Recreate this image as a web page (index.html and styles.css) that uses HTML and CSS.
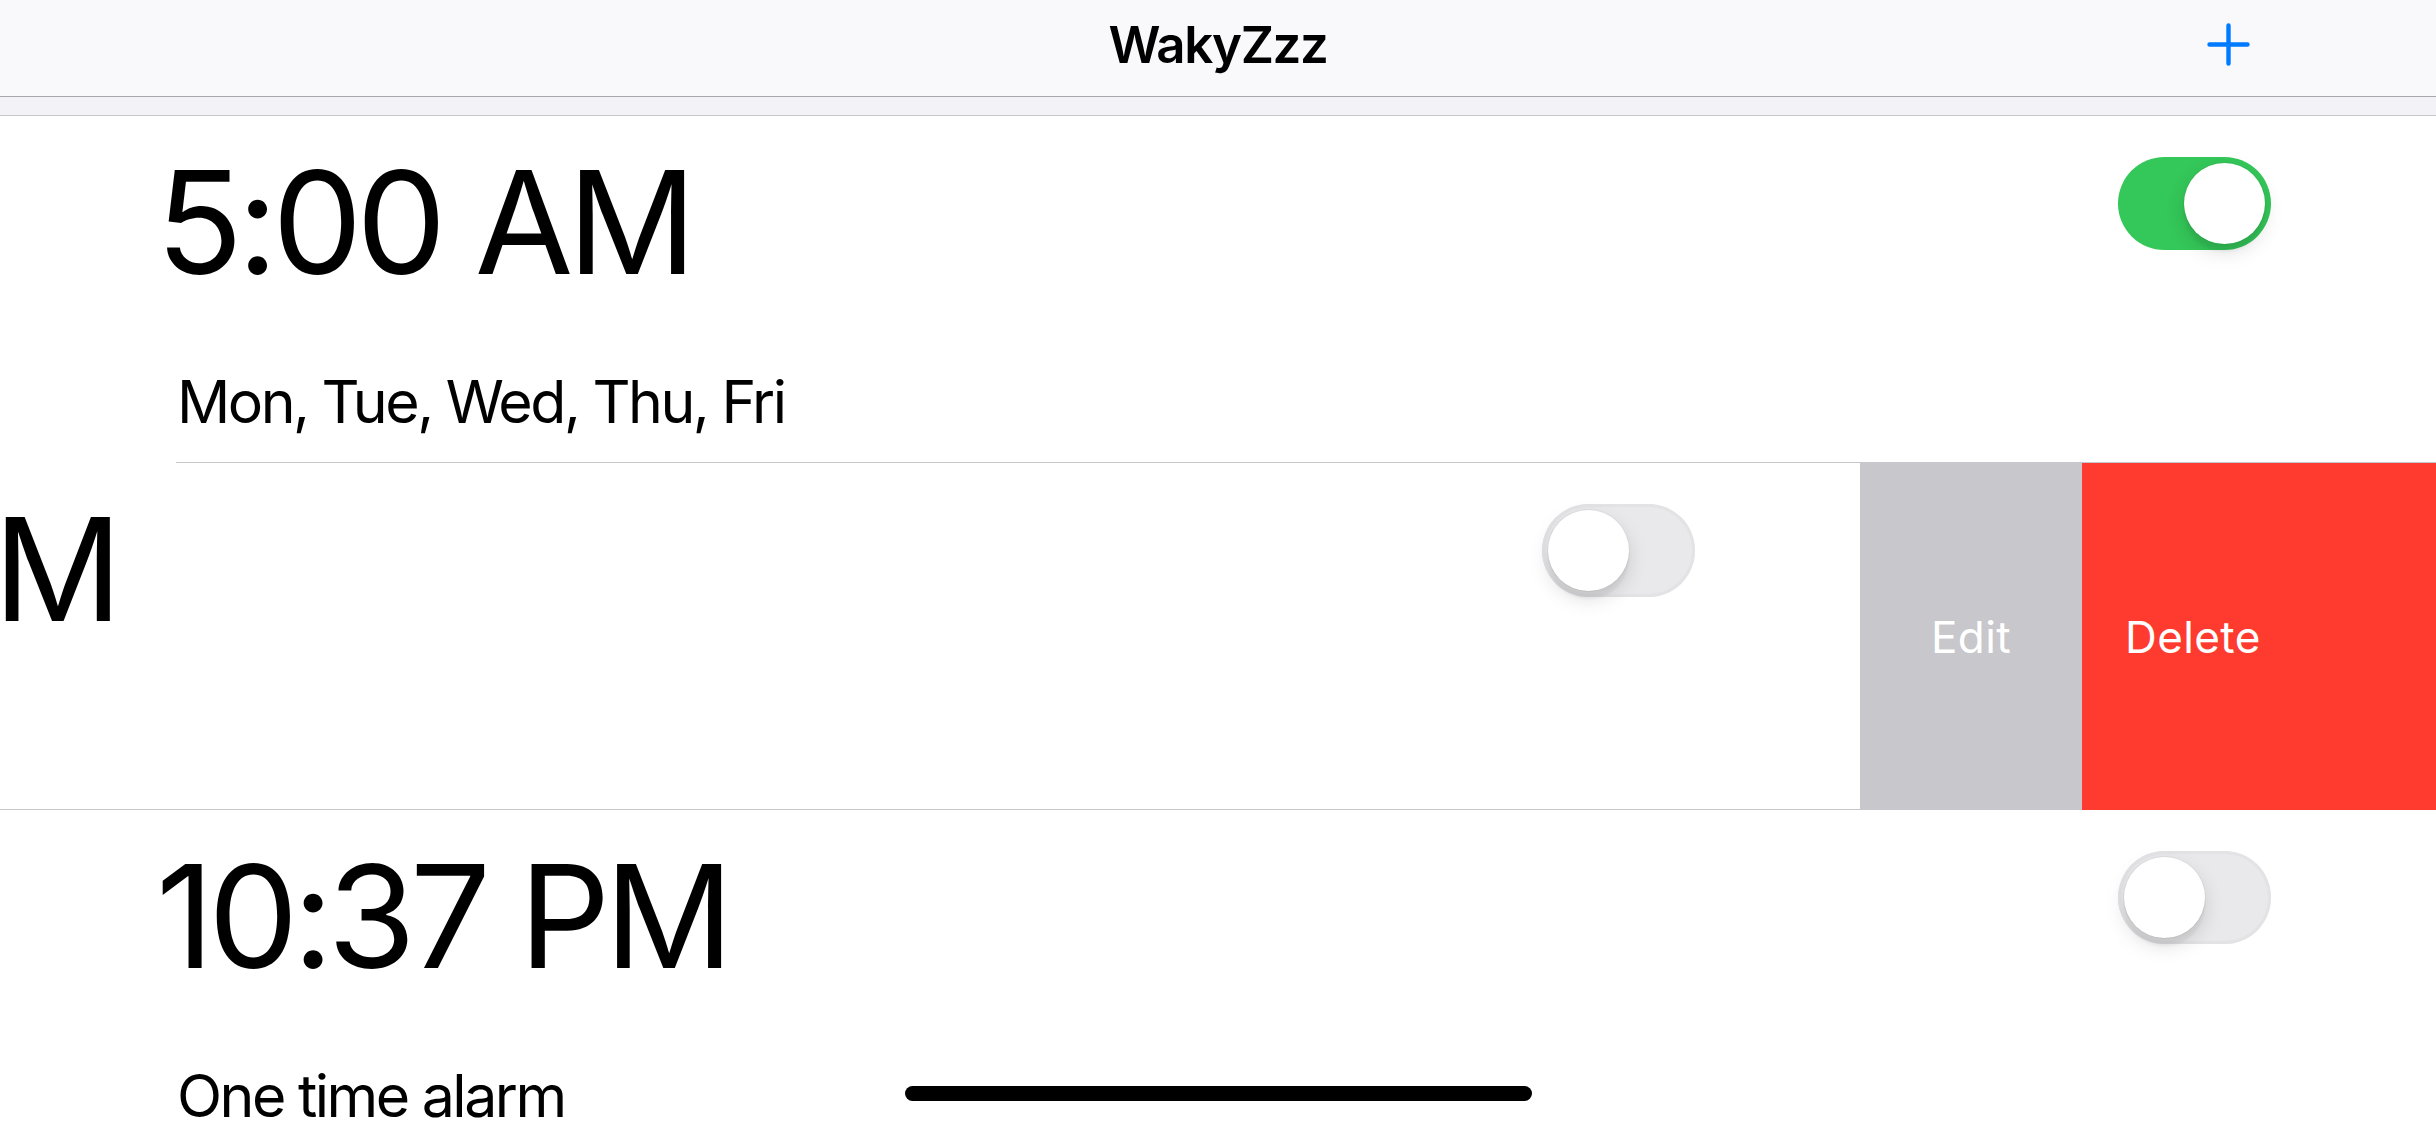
FILE: index.html
```html
<!DOCTYPE html>
<html lang="en">
<head>
<meta charset="utf-8">
<title>WakyZzz</title>
<link rel="stylesheet" href="styles.css">
</head>
<body>
<div class="screen">
  <header class="navbar">
    <div class="nav-side"></div>
    <h1 class="nav-title">WakyZzz</h1>
    <div class="nav-side nav-right">
      <svg class="plus" width="43" height="43" viewBox="0 0 43 43" aria-label="Add">
        <path d="M21.5 2.5V40.5M2.5 21.5H40.5" stroke="#007aff" stroke-width="4.4" stroke-linecap="round" fill="none"/>
      </svg>
    </div>
  </header>
  <div class="strip"></div>

  <div class="list">
    <div class="row">
      <div class="cell">
        <div class="cell-main">
          <div class="cell-text">
            <div class="time">5:00 AM</div>
            <div class="days">Mon, Tue, Wed, Thu, Fri</div>
          </div>
          <div class="switch on"><span class="knob"></span></div>
        </div>
        <div class="sep"></div>
      </div>
    </div>

    <div class="row swiped">
      <div class="cell">
        <div class="cell-main">
          <div class="cell-text">
            <div class="time">6:00 AM</div>
            <div class="days">Sat, Sun</div>
          </div>
          <div class="switch"><span class="knob"></span></div>
        </div>
        <div class="sep"></div>
      </div>
      <div class="actions">
        <div class="action edit">Edit</div>
        <div class="action delete">Delete</div>
      </div>
    </div>

    <div class="row">
      <div class="cell">
        <div class="cell-main">
          <div class="cell-text">
            <div class="time">10:37 PM</div>
            <div class="days">One time alarm</div>
          </div>
          <div class="switch"><span class="knob"></span></div>
        </div>
        <div class="sep"></div>
      </div>
    </div>
  </div>

  <div class="home-indicator"></div>
</div>
</body>
</html>
```

FILE: styles.css
```css
* { box-sizing: border-box; }

html, body {
  margin: 0;
  padding: 0;
  background: #ffffff;
}

body {
  font-family: Inter, "Noto Sans", "Liberation Sans", sans-serif;
  color: #000;
}

.screen {
  position: relative;
  width: 2436px;
  height: 1125px;
  overflow: hidden;
  background: #fff;
}

/* Navigation bar */
.navbar {
  height: 97px;
  background: #f9f9fb;
  border-bottom: 1px solid #a9a9ad;
  display: grid;
  grid-template-columns: 1fr auto 1fr;
  align-items: start;
}

.nav-title {
  margin: 0;
  padding-top: 19px;
  font-size: 51px;
  line-height: 51px;
  font-weight: 600;
  letter-spacing: -1.4px;
}

.nav-right {
  display: flex;
  justify-content: flex-end;
  padding-right: 186px;
  padding-top: 23px;
}

.plus { display: block; }

.strip {
  height: 19px;
  background: #f2f2f7;
  border-bottom: 1px solid #c8c7cc;
}

/* List */
.row {
  display: flex;
  overflow: hidden;
  background: #fff;
}

.cell {
  flex: 0 0 2436px;
  display: flex;
  flex-direction: column;
}

.swiped .cell { margin-left: -576px; }

.cell-main {
  display: grid;
  grid-template-columns: 1fr auto;
  padding: 34px 165px 31px 156px;
}

.time {
  font-size: 143px;
  line-height: 143px;
  font-weight: 400;
  letter-spacing: -6px;
}

.days {
  margin-top: 79px;
  padding-left: 21px;
  font-size: 59px;
  line-height: 59px;
  letter-spacing: -2.5px;
}

.sep {
  height: 1px;
  margin-left: 176px;
  background: #c8c7cc;
}

/* Switch */
.switch {
  width: 153px;
  height: 93px;
  margin-top: 7px;
  border-radius: 47px;
  background: #e9e9eb;
  padding: 6px;
  display: flex;
  justify-content: flex-start;
  align-items: center;
  box-shadow: inset 0 0 0 3px #e3e3e6;
}

.switch.on {
  background: #34c759;
  justify-content: flex-end;
  box-shadow: none;
}

.knob {
  width: 81px;
  height: 81px;
  border-radius: 50%;
  background: #fff;
  box-shadow: 0 8px 20px rgba(0, 0, 0, 0.13), 0 8px 3px rgba(0, 0, 0, 0.05), 0 0 0 1px rgba(0, 0, 0, 0.04);
}

/* Swipe actions */
.actions {
  flex: 0 0 576px;
  display: flex;
}

.action {
  display: flex;
  align-items: center;
  color: #fff;
  font-size: 44px;
  font-weight: 400;
  letter-spacing: 0.4px;
}

.action.edit {
  flex: 0 0 222px;
  justify-content: center;
  background: #c7c7cc;
}

.action.delete {
  flex: 1 1 auto;
  padding-left: 43px;
  background: #ff3b30;
}

/* Home indicator overlay */
.home-indicator {
  position: absolute;
  left: 905px;
  bottom: 24px;
  width: 627px;
  height: 15px;
  border-radius: 8px;
  background: #000;
}
```
